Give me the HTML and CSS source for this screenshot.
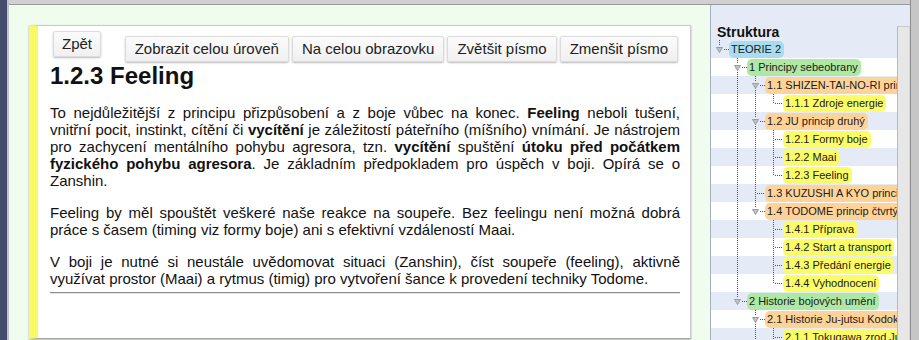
FILE: index.html
```html
<!DOCTYPE html>
<html lang="cs">
<head>
<meta charset="utf-8">
<title>1.2.3 Feeling</title>
<link rel="stylesheet" href="styles.css">
</head>
<body>
<div class="frame-l"></div>
<div class="app">
  <div class="topbar"></div>
  <div class="workspace">
    <div class="main">
      <div class="panel">
        <div class="toolbar">
          <button class="btn back">Zpět</button>
          <div class="tools">
            <button class="btn">Zobrazit celou úroveň</button>
            <button class="btn">Na celou obrazovku</button>
            <button class="btn">Zvětšit písmo</button>
            <button class="btn">Zmenšit písmo</button>
          </div>
        </div>
        <h1>1.2.3 Feeling</h1>
        <p>To nejdůležitější z principu přizpůsobení a z boje vůbec na konec. <b>Feeling</b> neboli tušení, vnitřní pocit, instinkt, cítění či <b>vycítění</b> je záležitostí páteřního (míšního) vnímání. Je nástrojem pro zachycení mentálního pohybu agresora, tzn. <b>vycítění</b> spuštění <b>útoku před počátkem fyzického pohybu agresora</b>. Je základním předpokladem pro úspěch v boji. Opírá se o Zanshin.</p>
        <p>Feeling by měl spouštět veškeré naše reakce na soupeře. Bez feelingu není možná dobrá práce s časem (timing viz formy boje) ani s efektivní vzdáleností Maai.</p>
        <p class="last">V boji je nutné si neustále uvědomovat situaci (Zanshin), číst soupeře (feeling), aktivně využívat prostor (Maai) a rytmus (timig) pro vytvoření šance k provedení techniky Todome.</p>
        <hr>
      </div>
    </div>
    <div class="sidebar">
      <div class="tree-col">
        <div class="side-title">Struktura</div>
        <div class="tree">
          <div class="row"><span class="c e"><svg class="tri" width="7" height="6" viewBox="0 0 7 6"><polygon points="0.5,0.5 6.5,0.5 3.5,5.5"/></svg></span><span class="lbl k0">TEORIE 2</span></div>
          <div class="row"><span class="c"></span><span class="c e more"><svg class="tri" width="7" height="6" viewBox="0 0 7 6"><polygon points="0.5,0.5 6.5,0.5 3.5,5.5"/></svg></span><span class="lbl k1">1 Principy sebeobrany</span></div>
          <div class="row"><span class="c"></span><span class="c v"></span><span class="c e more"><svg class="tri" width="7" height="6" viewBox="0 0 7 6"><polygon points="0.5,0.5 6.5,0.5 3.5,5.5"/></svg></span><span class="lbl k2">1.1 SHIZEN-TAI-NO-RI princip první</span></div>
          <div class="row"><span class="c"></span><span class="c v"></span><span class="c v"></span><span class="c l"></span><span class="lbl k3">1.1.1 Zdroje energie</span></div>
          <div class="row"><span class="c"></span><span class="c v"></span><span class="c e more"><svg class="tri" width="7" height="6" viewBox="0 0 7 6"><polygon points="0.5,0.5 6.5,0.5 3.5,5.5"/></svg></span><span class="lbl k2">1.2 JU princip druhý</span></div>
          <div class="row"><span class="c"></span><span class="c v"></span><span class="c v"></span><span class="c t"></span><span class="lbl k3">1.2.1 Formy boje</span></div>
          <div class="row"><span class="c"></span><span class="c v"></span><span class="c v"></span><span class="c t"></span><span class="lbl k3">1.2.2 Maai</span></div>
          <div class="row"><span class="c"></span><span class="c v"></span><span class="c v"></span><span class="c l"></span><span class="lbl k3">1.2.3 Feeling</span></div>
          <div class="row"><span class="c"></span><span class="c v"></span><span class="c t"></span><span class="lbl k2">1.3 KUZUSHI A KYO princip třetí</span></div>
          <div class="row"><span class="c"></span><span class="c v"></span><span class="c e"><svg class="tri" width="7" height="6" viewBox="0 0 7 6"><polygon points="0.5,0.5 6.5,0.5 3.5,5.5"/></svg></span><span class="lbl k2">1.4 TODOME princip čtvrtý</span></div>
          <div class="row"><span class="c"></span><span class="c v"></span><span class="c"></span><span class="c t"></span><span class="lbl k3">1.4.1 Příprava</span></div>
          <div class="row"><span class="c"></span><span class="c v"></span><span class="c"></span><span class="c t"></span><span class="lbl k3">1.4.2 Start a transport</span></div>
          <div class="row"><span class="c"></span><span class="c v"></span><span class="c"></span><span class="c t"></span><span class="lbl k3">1.4.3 Předání energie</span></div>
          <div class="row"><span class="c"></span><span class="c v"></span><span class="c"></span><span class="c l"></span><span class="lbl k3">1.4.4 Vyhodnocení</span></div>
          <div class="row"><span class="c"></span><span class="c e"><svg class="tri" width="7" height="6" viewBox="0 0 7 6"><polygon points="0.5,0.5 6.5,0.5 3.5,5.5"/></svg></span><span class="lbl k1">2 Historie bojových umění</span></div>
          <div class="row"><span class="c"></span><span class="c"></span><span class="c e more"><svg class="tri" width="7" height="6" viewBox="0 0 7 6"><polygon points="0.5,0.5 6.5,0.5 3.5,5.5"/></svg></span><span class="lbl k2">2.1 Historie Ju-jutsu Kodokan</span></div>
          <div class="row"><span class="c"></span><span class="c"></span><span class="c v"></span><span class="c t"></span><span class="lbl k3">2.1.1 Tokugawa zrod Ju-jutsu</span></div>
        </div>
      </div>
      <div class="scroll"></div>
    </div>
  </div>
</div>
<div class="frame-r"></div>
</body>
</html>
```
FILE: styles.css
```css
html, body {
  margin: 0;
  padding: 0;
}
body {
  display: flex;
  width: 919px;
  height: 340px;
  overflow: hidden;
  font-family: "Liberation Sans", Arial, sans-serif;
  color: #111;
  background: #f0fdee;
}
.frame-l {
  width: 7px;
  flex: none;
  background: #454b6c;
  border-right: 2px solid #bfc2cc;
}
.frame-r {
  width: 8px;
  flex: none;
  background: #c6c6c6;
  border-left: 1px solid #8e8e8e;
}
.app {
  flex: 1;
  display: flex;
  flex-direction: column;
  min-width: 0;
}
.topbar {
  height: 4px;
  flex: none;
  background: #d0d0d0;
  border-bottom: 1px solid #9a9a9a;
}
.workspace {
  flex: 1;
  display: flex;
  min-height: 0;
}
.main {
  width: 701px;
  flex: none;
  background: #f0fdee;
  padding: 20px 19px 0 20px;
  box-sizing: border-box;
}
.panel {
  height: 314px;
  box-sizing: border-box;
  background: #fff;
  border-left: 9px solid #f9f968;
  border-top: 1px solid #cacaca;
  border-right: 1px solid #cacaca;
  border-bottom: 1px solid #a8a8a8;
  box-shadow: 0 1px 2px rgba(0, 0, 0, 0.3);
  padding: 5px 10px 0 12px;
}
.toolbar {
  display: flex;
  align-items: flex-start;
}
.btn {
  font: 15px/17px "Liberation Sans", Arial, sans-serif;
  color: #222;
  background: linear-gradient(#fbfbfb, #f0f0f0);
  border: 1px solid #dcdcdc;
  border-radius: 2px;
  box-shadow: 0 1px 2px rgba(0, 0, 0, 0.28);
  padding: 3px 9px 4px;
  margin: 0;
}
.back {
  margin-left: 3px;
  padding: 3px 8px 4px;
}
.tools {
  margin-left: auto;
  margin-right: 2px;
  margin-top: 5px;
  display: flex;
  gap: 3px;
}
h1 {
  font-size: 24px;
  line-height: 28px;
  font-weight: bold;
  margin: 0 0 14px;
  color: #111;
}
p {
  font-size: 15px;
  line-height: 17px;
  margin: 0 0 15px;
  text-align: justify;
}
p.last {
  margin-bottom: 0;
}
hr {
  margin: 5px 0 0;
  height: 0;
  border: 0;
  border-top: 1px solid #8c8c8c;
  border-bottom: 1px solid #e6e6e6;
}

/* sidebar */
.sidebar {
  width: 200px;
  flex: none;
  box-sizing: border-box;
  border-left: 1px solid #a6afbe;
  background: #e4ebf7;
  display: flex;
}
.tree-col {
  width: 186px;
  flex: none;
  overflow: hidden;
}
.side-title {
  font-weight: bold;
  font-size: 14px;
  line-height: 15px;
  padding: 20px 0 0 6px;
  color: #111;
}
.scroll {
  width: 11px;
  flex: none;
  margin-top: 21px;
  background: #e7e7e7;
  border-left: 1px solid #b9b9b9;
  border-top: 1px solid #c9c9c9;
  border-right: 1px solid #d6d6d6;
}
.row {
  height: 18px;
  display: flex;
  align-items: center;
  white-space: nowrap;
  overflow: hidden;
  font-size: 11px;
  color: #1a1a1a;
}
.row:nth-child(even) {
  background: #fff;
}
.c {
  width: 18px;
  height: 18px;
  flex: none;
  box-sizing: border-box;
}
.v {
  background: repeating-linear-gradient(to bottom, #555 0 1px, transparent 1px 2px) 8px 0 / 1px 18px no-repeat;
}
.t {
  background:
    repeating-linear-gradient(to bottom, #555 0 1px, transparent 1px 2px) 8px 0 / 1px 18px no-repeat,
    repeating-linear-gradient(to right, #555 0 1px, transparent 1px 2px) 10px 9px / 8px 1px no-repeat;
}
.l {
  background:
    repeating-linear-gradient(to bottom, #555 0 1px, transparent 1px 2px) 8px 0 / 1px 10px no-repeat,
    repeating-linear-gradient(to right, #555 0 1px, transparent 1px 2px) 10px 9px / 8px 1px no-repeat;
}
.e {
  display: flex;
  align-items: center;
  padding-left: 5px;
  background:
    repeating-linear-gradient(to bottom, #555 0 1px, transparent 1px 2px) 8px 0 / 1px 6px no-repeat,
    repeating-linear-gradient(to right, #555 0 1px, transparent 1px 2px) 13px 9px / 5px 1px no-repeat;
}
.e.more {
  background:
    repeating-linear-gradient(to bottom, #555 0 1px, transparent 1px 2px) 8px 0 / 1px 6px no-repeat,
    repeating-linear-gradient(to bottom, #555 0 1px, transparent 1px 2px) 8px 12px / 1px 6px no-repeat,
    repeating-linear-gradient(to right, #555 0 1px, transparent 1px 2px) 13px 9px / 5px 1px no-repeat;
}
.tri {
  display: block;
  margin-top: 1px;
}
.tri polygon {
  fill: #c2c2c2;
  stroke: #9c9c9c;
  stroke-width: 1;
}
.lbl {
  flex: none;
  height: 17px;
  line-height: 17px;
  padding: 0 3px 0 2px;
  border-radius: 5px;
}
.k0 { background: #a9dcee; }
.k1 { background: #aee8a4; }
.k2 { background: #ffd397; }
.k3 { background: #fcfc66; }
```
